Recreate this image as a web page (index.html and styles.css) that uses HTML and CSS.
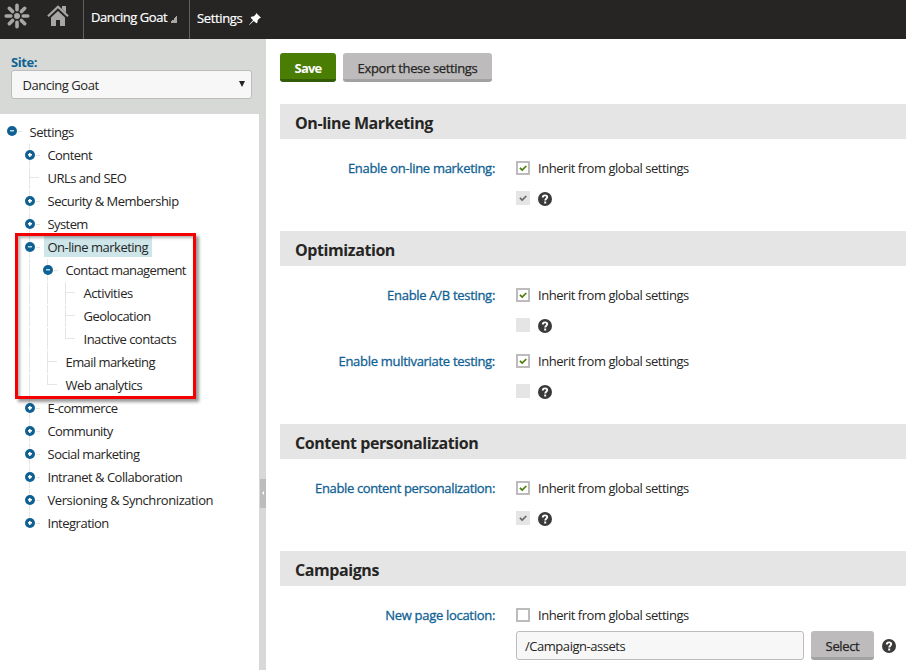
FILE: index.html
```html
<!DOCTYPE html>
<html lang="en">
<head>
<meta charset="utf-8">
<title>Settings</title>
<link rel="stylesheet" href="styles.css">
</head>
<body>
<svg class="defs" aria-hidden="true">
  <symbol id="check" viewBox="0 0 14 14"><path d="M3.9 6.8 6.2 9 10.3 5" fill="none" stroke="currentColor" stroke-width="1.7"/></symbol>
  <symbol id="help" viewBox="0 0 14 14"><circle cx="7" cy="7" r="7" fill="#3c3a39"/><path d="M4.8 5.5C4.8 2.6 9.3 2.7 9.2 5.3 9.1 6.8 7.2 6.8 7.2 8.5" fill="none" stroke="#fff" stroke-width="1.9"/><rect x="6.2" y="9.5" width="2" height="2" fill="#fff"/></symbol>
</svg>
<header class="topbar">
  <svg class="logo" viewBox="0 0 26 26"><g stroke="#a9a7a6" stroke-width="3.6" stroke-linecap="round"><path d="M13 2.2V6.8M13 19.2V23.8M2.2 13H6.8M19.2 13H23.8M5.3 5.3 8.6 8.6M17.4 17.4 20.7 20.7M20.7 5.3 17.4 8.6M8.6 17.4 5.3 20.7"/></g><circle cx="13" cy="13" r="3" fill="#a9a7a6"/></svg>
  <svg class="home" viewBox="0 0 22 22"><path d="M1 11.2 11 1.8 21 11.2" fill="none" stroke="#a9a7a6" stroke-width="2.2"/><path d="M15 1h4v7l-4-4zM4 12.4 11 6l7 6.4V21h-5v-6H9v6H4z" fill="#a9a7a6"/></svg>
  <div class="site"><span class="site-name">Dancing Goat</span><i class="corner"></i></div>
  <div class="app"><span class="app-name">Settings</span>
    <svg class="pin" viewBox="0 0 12 12"><path d="M7.2 0 12 4.8 10.6 5.3 8.8 7.1 8.3 9.8 7.2 10.3 4.8 7.9.3 12 0 11.7 4.1 7.2 1.7 4.8 2.2 3.7 4.9 3.2 6.7 1.4z" fill="#fff"/></svg>
  </div>
</header>
<div class="layout">
  <aside class="sidebar">
    <div class="site-picker">
      <label class="picker-label">Site:</label>
      <div class="picker"><span>Dancing Goat</span><i class="arrow"></i></div>
    </div>
    <nav class="tree">
      <div class="node root"><i class="cell toggle minus"></i><span>Settings</span></div>
      <div class="node"><i class="blank"></i><i class="cell line toggle plus"></i><span class="tight">Content</span></div>
      <div class="node"><i class="blank"></i><i class="cell line leaf"></i><span>URLs and SEO</span></div>
      <div class="node"><i class="blank"></i><i class="cell line toggle plus"></i><span>Security &amp; Membership</span></div>
      <div class="node"><i class="blank"></i><i class="cell line toggle plus"></i><span class="tight">System</span></div>
      <div class="node"><i class="blank"></i><i class="cell line toggle minus"></i><span class="selected">On-line marketing</span></div>
      <div class="node"><i class="blank"></i><i class="cell line"></i><i class="cell line toggle minus"></i><span class="tight">Contact management</span></div>
      <div class="node"><i class="blank"></i><i class="cell line"></i><i class="cell line"></i><i class="cell line leaf"></i><span class="loose">Activities</span></div>
      <div class="node"><i class="blank"></i><i class="cell line"></i><i class="cell line"></i><i class="cell line leaf"></i><span>Geolocation</span></div>
      <div class="node"><i class="blank"></i><i class="cell line"></i><i class="cell line"></i><i class="cell line leaf last"></i><span>Inactive contacts</span></div>
      <div class="node"><i class="blank"></i><i class="cell line"></i><i class="cell line leaf"></i><span class="tight">Email marketing</span></div>
      <div class="node"><i class="blank"></i><i class="cell line"></i><i class="cell line leaf last"></i><span>Web analytics</span></div>
      <div class="node"><i class="blank"></i><i class="cell line toggle plus"></i><span class="tight">E-commerce</span></div>
      <div class="node"><i class="blank"></i><i class="cell line toggle plus"></i><span class="tight">Community</span></div>
      <div class="node"><i class="blank"></i><i class="cell line toggle plus"></i><span>Social marketing</span></div>
      <div class="node"><i class="blank"></i><i class="cell line toggle plus"></i><span>Intranet &amp; Collaboration</span></div>
      <div class="node"><i class="blank"></i><i class="cell line toggle plus"></i><span class="loose">Versioning &amp; Synchronization</span></div>
      <div class="node"><i class="blank"></i><i class="cell line last toggle plus"></i><span>Integration</span></div>
      <div class="highlight"></div>
    </nav>
    <div class="handle"></div>
  </aside>
  <main class="content">
    <div class="actions"><button class="btn save">Save</button><button class="btn export">Export these settings</button></div>
    <section>
      <h2>On-line Marketing</h2>
      <div class="fields">
        <div class="field"><label>Enable on-line marketing:</label>
          <div class="row"><svg class="box on"><use href="#check"/></svg><span class="inherit">Inherit from global settings</span></div>
          <div class="row second"><svg class="box off"><use href="#check"/></svg><svg class="help"><use href="#help"/></svg></div></div>
      </div>
    </section>
    <section>
      <h2>Optimization</h2>
      <div class="fields">
        <div class="field"><label>Enable A/B testing:</label>
          <div class="row"><svg class="box on"><use href="#check"/></svg><span class="inherit">Inherit from global settings</span></div>
          <div class="row second"><svg class="box off"></svg><svg class="help"><use href="#help"/></svg></div></div>
        <div class="field"><label>Enable multivariate testing:</label>
          <div class="row"><svg class="box on"><use href="#check"/></svg><span class="inherit">Inherit from global settings</span></div>
          <div class="row second"><svg class="box off"></svg><svg class="help"><use href="#help"/></svg></div></div>
      </div>
    </section>
    <section>
      <h2>Content personalization</h2>
      <div class="fields">
        <div class="field"><label class="wide">Enable content personalization:</label>
          <div class="row"><svg class="box on"><use href="#check"/></svg><span class="inherit">Inherit from global settings</span></div>
          <div class="row second"><svg class="box off"><use href="#check"/></svg><svg class="help"><use href="#help"/></svg></div></div>
      </div>
    </section>
    <section>
      <h2>Campaigns</h2>
      <div class="fields">
        <div class="field"><label>New page location:</label>
          <div class="row"><svg class="box on"></svg><span class="inherit">Inherit from global settings</span></div>
          <div class="row path-row"><div class="path">/Campaign-assets</div><button class="btn select">Select</button><svg class="help"><use href="#help"/></svg></div></div>
      </div>
    </section>
  </main>
</div>
</body>
</html>
```

FILE: styles.css
```css
* { box-sizing: border-box; }
body { margin: 0; width: 906px; height: 670px; overflow: hidden; display: flex; flex-direction: column; background: #fff; color: #262524; font: 13px/20px "Open Sans", "Noto Sans", sans-serif; letter-spacing: -.46px; white-space: nowrap; }
.defs { position: absolute; width: 0; height: 0; }
span, label { flex: none; }

.topbar { flex: none; height: 39px; display: flex; background: #262524; color: #fff; }
.topbar span { -webkit-text-stroke: .2px #fff; }
.logo { flex: none; width: 26px; height: 26px; margin: 3px 0 0 4px; }
.home { flex: none; width: 22px; height: 22px; margin: 5px 0 0 17px; }
.site { width: 106px; margin-left: 14px; border-left: 1px solid #62605f; display: flex; padding: 7px 0 0 7px; }
.corner { flex: none; width: 7px; height: 7px; margin: 9px 0 0 3px; background: linear-gradient(135deg, transparent 50%, #a9a7a6 50%); }
.app { border-left: 1px solid #62605f; display: flex; padding: 8px 0 0 7px; }
.app-name { letter-spacing: -.35px; }
.pin { flex: none; width: 12px; height: 12px; margin: 5px 0 0 7px; }

.layout { flex: 1; min-height: 0; display: flex; }
.sidebar { position: relative; flex: none; width: 266px; display: flex; flex-direction: column; background: #d6d9d6; }
.site-picker { flex: none; height: 75px; padding: 13px 0 0 11px; display: flex; flex-direction: column; }
.picker-label { height: 18px; color: #0f6194; font-weight: 700; line-height: 20px; letter-spacing: -.4px; }
.picker { width: 241px; height: 29px; display: flex; justify-content: space-between; padding: 4px 6px 0 10.5px; border: 1px solid #bdbbbb; border-radius: 3px; background: #f7f7f7; }
.arrow { width: 6px; height: 6px; margin-top: 6px; background: #262524; clip-path: polygon(0 0, 100% 0, 50% 100%); }
.tree { position: relative; flex: 1; width: 259px; padding: 7px 0 0 3px; background: #fff; }
.node { height: 23px; display: flex; }
.node span { height: 21px; margin-left: 5px; padding: 1px 4px 0 3.5px; letter-spacing: -.5px; }
.node .tight { letter-spacing: -.58px; }
.node .loose { letter-spacing: -.42px; }
.node .selected { background: #cee5ea; }
.blank, .cell { flex: none; width: 18px; height: 23px; }
.line { background: linear-gradient(#e5e5e5, #e5e5e5) 8px 0 / 1px 22px no-repeat; }
.leaf { background: linear-gradient(#e5e5e5, #e5e5e5) 8px 0 / 1px 22px no-repeat, linear-gradient(#e5e5e5, #e5e5e5) 8px 10px / 11px 1px no-repeat; }
.last { background-size: 1px 11px, 11px 1px; }
.toggle { display: flex; padding: 6px 0 0 4px; }
.root .toggle { padding-top: 5px; }
.toggle::before { content: ""; flex: none; width: 10px; height: 10px; border-radius: 50%; }
.toggle::after { content: ""; flex: none; width: 4px; height: 1px; margin-top: 5px; margin-left: 1px; background: #e5e5e5; }
.minus::before { background: linear-gradient(#b9d5e5, #b9d5e5) 3px 4px / 4px 1.5px no-repeat #0f6194; }
.plus::before { background: linear-gradient(#fff, #fff) 3px 4.2px / 4px 1.6px no-repeat, linear-gradient(#fff, #fff) 4.2px 3px / 1.6px 4px no-repeat #0f6194; }
.highlight { position: absolute; left: 15px; top: 119px; width: 181px; height: 166px; border: 3px solid #f50000; box-shadow: 3px 3px 3px rgba(0,0,0,.4), inset 2px 2px 3px rgba(0,0,0,.3); }
.handle { position: absolute; left: 260px; top: 440px; width: 6px; height: 29px; background: #bdbbbb; }
.handle::before { content: ""; position: absolute; left: 2px; top: 12px; border: 2.5px solid transparent; border-left: 0; border-right: 2.5px solid #fff; }

.content { flex: 1; padding: 14px 0 0 14px; }
.actions { display: flex; gap: 7px; height: 51px; }
.btn { height: 29px; padding: 3px 0 0; border: 0; border-bottom: 3px solid #a3a2a2; border-radius: 3px; background: #bdbbbb; color: #262524; font: 13px/20px "Open Sans", "Noto Sans", sans-serif; letter-spacing: -.35px; -webkit-text-stroke: .25px currentColor; }
.save { width: 56px; border-color: #335c08; background: #497d04; color: #fff; font-weight: 700; letter-spacing: -.8px; -webkit-text-stroke: 0; }
.export { width: 149px; }
h2 { margin: 0; height: 35px; padding-left: 15px; background: #e5e5e5; font-size: 16px; line-height: 38px; font-weight: 700; letter-spacing: -.42px; }
.fields { padding: 14px 0 12px; }
.field { display: grid; grid-template-columns: 215px 1fr; grid-template-rows: 30px 30px; column-gap: 21px; margin-bottom: 6px; }
.field label { justify-self: end; line-height: 31px; color: #0f6194; letter-spacing: -.3px; -webkit-text-stroke: .3px #0f6194; }
.field .wide { letter-spacing: -.36px; }
.row { display: flex; align-items: center; }
.second, .path-row { grid-column: 2; }
.box { flex: none; width: 14px; height: 14px; margin-right: 8px; }
.on { box-shadow: inset 0 0 0 2px #bdbbbb; color: #497d04; }
.off { background: #e5e5e5; color: #696663; }
.inherit { line-height: 31px; }
.help { flex: none; width: 14px; height: 14px; margin-top: 1px; }
.path { width: 288px; height: 29px; padding: 4px 8px; border: 1px solid #bdbbbb; border-radius: 3px; background: #f7f7f7; }
.path-row .help { margin: 0 0 0 7.5px; }
.path-row { align-items: center; padding-top: 1px; }
.select { width: 63px; margin-left: 7px; }
```
